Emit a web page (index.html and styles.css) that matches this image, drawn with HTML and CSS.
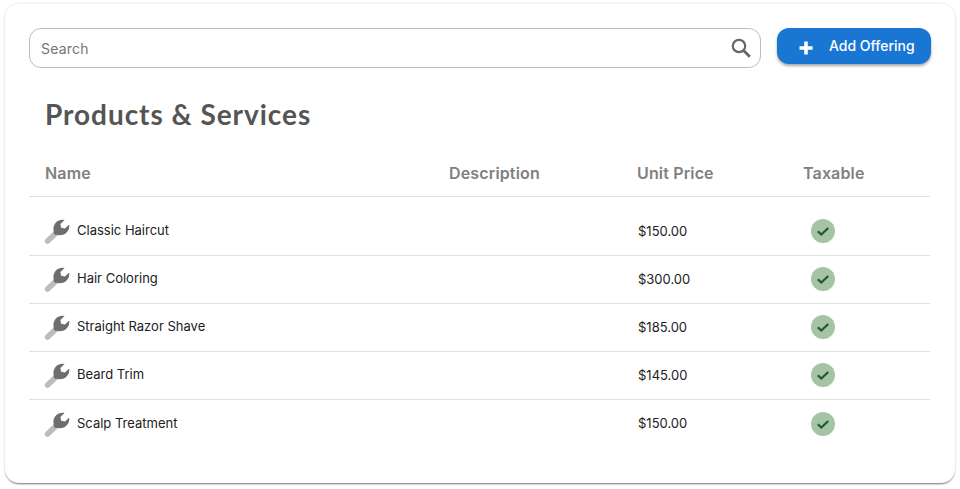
FILE: index.html
```html
<!DOCTYPE html>
<html lang="en">
<head>
<meta charset="utf-8">
<title>Products &amp; Services</title>
<link rel="stylesheet" href="styles.css">
</head>
<body>
<main class="card">
  <div class="toolbar">
    <div class="search">
      <span class="search-text">Search</span>
      <svg class="search-icon" viewBox="0 0 20 20" width="20" height="20"><circle cx="8" cy="8" r="6.2" fill="none" stroke="#666" stroke-width="2.2"/><path d="M12.6 12.6L18.8 18.8" stroke="#666" stroke-width="2.8" fill="none"/></svg>
    </div>
    <button class="add-btn">
      <svg class="plus" viewBox="0 0 14 14" width="14" height="14"><path d="M5.2 0.5h3.6v4.7h4.7v3.6H8.8v4.7H5.2V8.8H0.5V5.2h4.7z" fill="#fff"/></svg>
      <span>Add Offering</span>
    </button>
  </div>
  <h1 class="title">Products &amp; Services</h1>
  <div class="row head">
    <div>Name</div><div>Description</div><div>Unit Price</div><div>Taxable</div>
  </div>
  <div class="rows">
    <div class="row item">
      <div class="name"><svg class="wrench" viewBox="0 -1 26 26" width="26" height="26"><use href="#w"/></svg><span class="name-text">Classic Haircut</span></div><div></div><div class="price">$150.00</div><div class="tax"><svg class="check" viewBox="0 0 24 24" width="24" height="24"><use href="#c"/></svg></div>
    </div>
    <div class="row item">
      <div class="name"><svg class="wrench" viewBox="0 -1 26 26" width="26" height="26"><use href="#w"/></svg><span class="name-text">Hair Coloring</span></div><div></div><div class="price">$300.00</div><div class="tax"><svg class="check" viewBox="0 0 24 24" width="24" height="24"><use href="#c"/></svg></div>
    </div>
    <div class="row item">
      <div class="name"><svg class="wrench" viewBox="0 -1 26 26" width="26" height="26"><use href="#w"/></svg><span class="name-text">Straight Razor Shave</span></div><div></div><div class="price">$185.00</div><div class="tax"><svg class="check" viewBox="0 0 24 24" width="24" height="24"><use href="#c"/></svg></div>
    </div>
    <div class="row item">
      <div class="name"><svg class="wrench" viewBox="0 -1 26 26" width="26" height="26"><use href="#w"/></svg><span class="name-text">Beard Trim</span></div><div></div><div class="price">$145.00</div><div class="tax"><svg class="check" viewBox="0 0 24 24" width="24" height="24"><use href="#c"/></svg></div>
    </div>
    <div class="row item last">
      <div class="name"><svg class="wrench" viewBox="0 -1 26 26" width="26" height="26"><use href="#w"/></svg><span class="name-text">Scalp Treatment</span></div><div></div><div class="price">$150.00</div><div class="tax"><svg class="check" viewBox="0 0 24 24" width="24" height="24"><use href="#c"/></svg></div>
    </div>
  </div>
</main>
<svg class="defs" width="0" height="0">
  <defs>
    <g id="w">
      <path d="M3.6 22L12.4 13.6" stroke="#bdbdbd" stroke-width="5.6" stroke-linecap="round" fill="none"/>
      <path d="M10.2 15.4L15.4 16.2C21.6 16.4 26 11.4 25.2 5.4L21 9.6L17.2 8.8L16.4 5L20.6 1C14.6 -0.4 9.2 4.2 9.4 10.4Z" fill="#6e6e6e"/>
    </g>
    <g id="c">
      <circle cx="12" cy="12" r="12" fill="#a5c4a6"/>
      <path d="M6.8 12.2L10.4 15.6L17.2 9" stroke="#1b5e20" stroke-width="2.2" fill="none"/>
    </g>
  </defs>
</svg>
</body>
</html>
```

FILE: styles.css
```css
* { box-sizing: border-box; }
html, body { margin: 0; height: 100%; background: #fff; }
body { padding: 4px 5px 6px; font-family: Inter, "Liberation Sans", sans-serif; overflow: hidden; }
.card {
  height: 479px;
  background: #fff;
  border-radius: 14px;
  padding: 24px 24px 0;
  box-shadow: 0 2px 2px -1px rgba(0,0,0,.5), 0 0 3px rgba(0,0,0,.14);
}
.toolbar { display: flex; align-items: flex-start; gap: 16px; }
.search {
  flex: 1;
  height: 40px;
  border: 1px solid #bdbdbd;
  border-radius: 12px;
  display: flex;
  align-items: center;
  justify-content: space-between;
  padding: 0 9px 0 11px;
}
.search-text { font-size: 14px; color: #757575; letter-spacing: .2px; }
.add-btn {
  width: 154px;
  height: 36px;
  border: 0;
  border-radius: 12px;
  background: #1976d2;
  color: #fff;
  font: 500 14px/17px Inter, "Liberation Sans", sans-serif;
  display: flex;
  align-items: center;
  padding: 0 0 2px 22px;
  gap: 16px;
  box-shadow: 0 2px 3px rgba(0,0,0,.35);
}
.plus { margin-top: 5px; }
.title {
  margin: 28px 0 0 16px;
  font: 700 28px/36px Lato, "Liberation Sans", sans-serif;
  letter-spacing: .95px;
  color: #555;
}
.row {
  display: grid;
  grid-template-columns: 404px 188px 166px 1fr;
  padding-left: 16px;
  margin-right: 1px;
}
.head {
  margin-top: 18px;
  height: 47px;
  align-items: center;
  font-size: 16px;
  font-weight: 600;
  letter-spacing: .15px;
  color: #808080;
  border-bottom: 1px solid #e0e0e0;
}
.rows { padding-top: 11px; }
.item {
  height: 48px;
  padding-bottom: 2px;
  align-items: center;
  font-size: 13px;
  color: #212121;
  border-bottom: 1px solid #e0e0e0;
}
.item.last { border-bottom: 0; padding-bottom: 0; }
.item.last .price { margin-top: -2px; }
.name { display: flex; align-items: center; gap: 7px; }
.name-text { margin-top: -2px; }
.price { padding-left: 1px; }
.wrench { margin-left: -1px; flex: none; }
.tax { display: flex; padding-left: 8px; }
.check { display: block; }
.defs { position: absolute; }
```
